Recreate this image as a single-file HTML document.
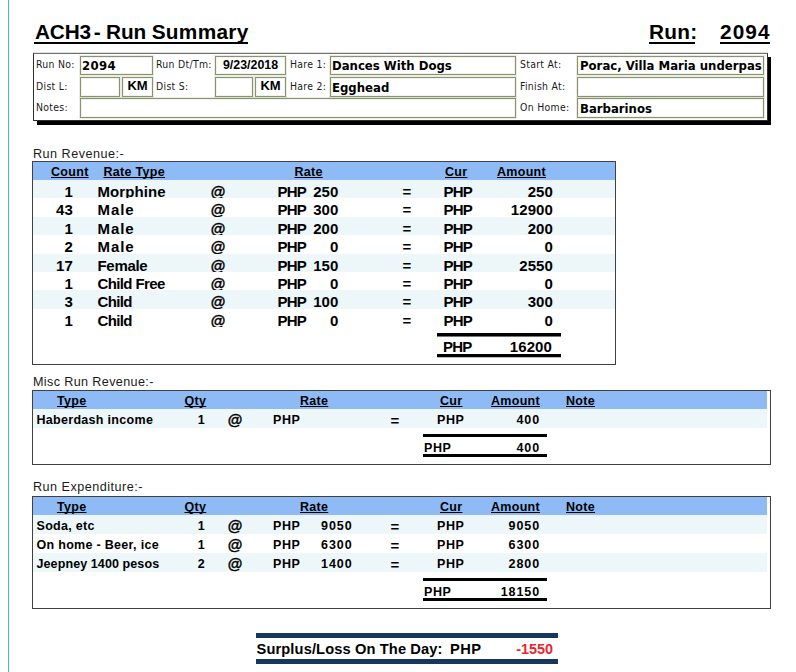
<!DOCTYPE html>
<html lang="en">
<head>
<meta charset="utf-8">
<title>ACH3 - Run Summary</title>
<style>
html,body{margin:0;padding:0;background:#fff;}
body{width:796px;height:672px;position:relative;overflow:hidden;font-family:"Liberation Sans",sans-serif;color:#000;}
.abs,.t,.box,.in,.band,.bar{position:absolute;}
.t{white-space:pre;line-height:1;}
.cal{font-family:"Liberation Sans",sans-serif;}
.lbl{font-family:"DejaVu Sans Condensed","Liberation Sans",sans-serif;font-size:10.4px;letter-spacing:0.3px;color:#1a1a1a;}
.val{font-family:"DejaVu Sans Condensed","Liberation Sans",sans-serif;font-weight:bold;font-size:13px;}
.arb{font-family:"Liberation Sans",sans-serif;font-weight:bold;font-size:12.4px;}
.in{box-sizing:border-box;border:1px solid #89946f;background:#fff;overflow:hidden;box-shadow:0 0 0 1px rgba(137,148,111,0.18), inset 0 0 0 1px rgba(137,148,111,0.12);}
.u{text-decoration:underline;}
.r{text-align:right;}
.c{text-align:center;}
.sec{font-size:12.6px;letter-spacing:0.5px;color:#1a1a1a;}
.th{font-weight:bold;font-size:12.5px;letter-spacing:0.3px;text-decoration:underline;text-decoration-skip-ink:none;}
.row{position:absolute;overflow:hidden;}
.row span{position:absolute;white-space:pre;line-height:1;font-weight:bold;}
.r1,.r1t{font-size:15px;top:4px;letter-spacing:0.1px;}
.r1t{font-weight:bold;}
.php{letter-spacing:-0.8px !important;}
.r2,.r2t{font-size:12.5px;top:5px;letter-spacing:0.3px;}
.row span.at{font-size:15px;top:3px;letter-spacing:0;}
.r2t{font-weight:bold;}
.php2{letter-spacing:0.6px !important;}
.num{letter-spacing:0.9px !important;}
.row span.ati{font-style:italic;-webkit-text-stroke:0.35px #000;}
.row span.eq{font-size:15px;top:4px;letter-spacing:0;}
.sur{font-weight:bold;font-size:14.67px;}
.surn{font-weight:bold;font-size:14.4px;color:#e8262d;}
</style>
</head>
<body>
<!-- left teal rule -->
<div class="abs" style="left:8px;top:0;width:1px;height:672px;background:#4fb5cb;"></div>
<div class="abs" style="left:9px;top:0;width:1px;height:672px;background:#f8f3f3;"></div>

<!-- title -->
<div class="t cal" id="title" style="left:35px;top:22px;font-size:20.8px;font-weight:bold;letter-spacing:-0.15px;"><span style="word-spacing:-3px;">ACH3 -</span> Run <span style="letter-spacing:0.3px;">Summary</span></div>
<div class="bar" style="left:34px;top:42px;width:214px;height:2px;background:#000;"></div>
<div class="t cal" id="runl" style="left:649px;letter-spacing:0.3px;top:22px;font-size:20.8px;font-weight:bold;">Run:</div>
<div class="bar" style="left:649px;top:42px;width:46px;height:2px;background:#000;"></div>
<div class="t cal" id="runv" style="left:720px;letter-spacing:1.1px;top:22px;font-size:20.8px;font-weight:bold;">2094</div>
<div class="bar" style="left:720px;top:42px;width:50px;height:2px;background:#000;"></div>

<!-- header box -->
<div class="bar" style="left:37px;top:121px;width:734px;height:4px;background:#000;"></div>
<div class="bar" style="left:768px;top:57px;width:3px;height:68px;background:#000;"></div>
<div class="box" style="left:33px;top:53px;width:735px;height:68px;box-sizing:border-box;border:1px solid #2e2e2e;border-top-color:#707070;background:#fff;box-shadow:0 -1px 0 rgba(0,0,0,0.12);"></div>

<div class="t lbl" style="left:36px;top:59px;">Run No:</div>
<div class="t lbl" style="left:36px;top:81px;">Dist L:</div>
<div class="t lbl" style="left:36px;top:102px;">Notes:</div>
<div class="t lbl" style="left:156px;top:59px;">Run Dt/Tm:</div>
<div class="t lbl" style="left:156px;top:81px;">Dist S:</div>
<div class="t lbl" style="left:290px;top:59px;">Hare 1:</div>
<div class="t lbl" style="left:290px;top:81px;">Hare 2:</div>
<div class="t lbl" style="left:520px;top:59px;">Start At:</div>
<div class="t lbl" style="left:520px;top:81px;">Finish At:</div>
<div class="t lbl" style="left:520px;top:102px;">On Home:</div>

<div class="in" style="left:80px;top:56px;width:73px;height:19px;"></div>
<div class="in" style="left:80px;top:77px;width:40px;height:20px;"></div>
<div class="in" style="left:122px;top:77px;width:31px;height:20px;"></div>
<div class="in" style="left:80px;top:98px;width:436px;height:20px;"></div>
<div class="in" style="left:215px;top:56px;width:71px;height:19px;"></div>
<div class="in" style="left:215px;top:77px;width:38px;height:20px;"></div>
<div class="in" style="left:255px;top:77px;width:31px;height:20px;"></div>
<div class="in" style="left:330px;top:56px;width:186px;height:19px;"></div>
<div class="in" style="left:330px;top:77px;width:186px;height:20px;"></div>
<div class="in" style="left:577px;top:56px;width:187px;height:19px;"></div>
<div class="in" style="left:577px;top:77px;width:187px;height:20px;"></div>
<div class="in" style="left:577px;top:98px;width:187px;height:20px;"></div>

<div class="t val" style="left:82px;top:59px;letter-spacing:0.4px;">2094</div>
<div class="t arb c" style="left:122px;top:79px;width:31px;font-size:13px;">KM</div>
<div class="t arb c" style="left:215px;top:59px;width:71px;">9/23/2018</div>
<div class="t arb c" style="left:255px;top:79px;width:31px;font-size:13px;">KM</div>
<div class="t val" style="left:332px;top:59px;">Dances With Dogs</div>
<div class="t val" style="left:332px;top:81px;">Egghead</div>
<div class="t val" style="left:580px;top:59px;">Porac, Villa Maria underpas</div>
<div class="t val" style="left:580px;top:102px;">Barbarinos</div>

<!--SECTIONS-->
<!-- Run Revenue -->
<div class="t sec" style="left:33px;top:148px;">Run Revenue:-</div>
<div class="box" style="left:32px;top:161px;width:584px;height:204px;box-sizing:border-box;border:1px solid #404040;"></div>
<div class="band" style="left:33px;top:162px;width:582px;height:18px;background:#8ebaf5;"></div>
<div class="t th" style="left:51px;top:166px;">Count</div>
<div class="t th" style="left:103.5px;top:166px;">Rate Type</div>
<div class="t th" style="left:294.5px;top:166px;">Rate</div>
<div class="t th" style="left:445px;top:166px;">Cur</div>
<div class="t th" style="left:497px;top:166px;">Amount</div>
<div class="row" style="left:33px;top:180px;width:582px;height:18px;background:#edf6f9;"><span class="r1" style="right:542px;">1</span><span class="r1" style="left:64.5px;letter-spacing:0.1px;">Morphine</span><span class="r1 ati" style="left:177.5px;">@</span><span class="r1 php" style="left:244.5px;">PHP</span><span class="r1" style="right:276.5px;">250</span><span class="r1" style="left:369.5px;">=</span><span class="r1 php" style="left:410.5px;">PHP</span><span class="r1" style="right:62px;">250</span></div>
<div class="row" style="left:33px;top:198px;width:582px;height:19px;"><span class="r1" style="right:542px;">43</span><span class="r1" style="left:64.5px;letter-spacing:0.9px;">Male</span><span class="r1 ati" style="left:177.5px;">@</span><span class="r1 php" style="left:244.5px;">PHP</span><span class="r1" style="right:276.5px;">300</span><span class="r1" style="left:369.5px;">=</span><span class="r1 php" style="left:410.5px;">PHP</span><span class="r1" style="right:62px;">12900</span></div>
<div class="row" style="left:33px;top:217px;width:582px;height:18px;background:#edf6f9;"><span class="r1" style="right:542px;">1</span><span class="r1" style="left:64.5px;letter-spacing:0.9px;">Male</span><span class="r1 ati" style="left:177.5px;">@</span><span class="r1 php" style="left:244.5px;">PHP</span><span class="r1" style="right:276.5px;">200</span><span class="r1" style="left:369.5px;">=</span><span class="r1 php" style="left:410.5px;">PHP</span><span class="r1" style="right:62px;">200</span></div>
<div class="row" style="left:33px;top:235px;width:582px;height:19px;"><span class="r1" style="right:542px;">2</span><span class="r1" style="left:64.5px;letter-spacing:0.9px;">Male</span><span class="r1 ati" style="left:177.5px;">@</span><span class="r1 php" style="left:244.5px;">PHP</span><span class="r1" style="right:276.5px;">0</span><span class="r1" style="left:369.5px;">=</span><span class="r1 php" style="left:410.5px;">PHP</span><span class="r1" style="right:62px;">0</span></div>
<div class="row" style="left:33px;top:254px;width:582px;height:18px;background:#edf6f9;"><span class="r1" style="right:542px;">17</span><span class="r1" style="left:64.5px;letter-spacing:-0.3px;">Female</span><span class="r1 ati" style="left:177.5px;">@</span><span class="r1 php" style="left:244.5px;">PHP</span><span class="r1" style="right:276.5px;">150</span><span class="r1" style="left:369.5px;">=</span><span class="r1 php" style="left:410.5px;">PHP</span><span class="r1" style="right:62px;">2550</span></div>
<div class="row" style="left:33px;top:272px;width:582px;height:18px;"><span class="r1" style="right:542px;">1</span><span class="r1" style="left:64.5px;letter-spacing:-0.62px;">Child Free</span><span class="r1 ati" style="left:177.5px;">@</span><span class="r1 php" style="left:244.5px;">PHP</span><span class="r1" style="right:276.5px;">0</span><span class="r1" style="left:369.5px;">=</span><span class="r1 php" style="left:410.5px;">PHP</span><span class="r1" style="right:62px;">0</span></div>
<div class="row" style="left:33px;top:290px;width:582px;height:19px;background:#edf6f9;"><span class="r1" style="right:542px;">3</span><span class="r1" style="left:64.5px;letter-spacing:-0.65px;">Child</span><span class="r1 ati" style="left:177.5px;">@</span><span class="r1 php" style="left:244.5px;">PHP</span><span class="r1" style="right:276.5px;">100</span><span class="r1" style="left:369.5px;">=</span><span class="r1 php" style="left:410.5px;">PHP</span><span class="r1" style="right:62px;">300</span></div>
<div class="row" style="left:33px;top:309px;width:582px;height:18px;"><span class="r1" style="right:542px;">1</span><span class="r1" style="left:64.5px;letter-spacing:-0.65px;">Child</span><span class="r1 ati" style="left:177.5px;">@</span><span class="r1 php" style="left:244.5px;">PHP</span><span class="r1" style="right:276.5px;">0</span><span class="r1" style="left:369.5px;">=</span><span class="r1 php" style="left:410.5px;">PHP</span><span class="r1" style="right:62px;">0</span></div>
<div class="bar" style="left:437px;top:333px;width:124px;height:3px;background:#000;border-bottom:1px solid #777;"></div>
<div class="bar" style="left:437px;top:354px;width:124px;height:3px;background:#000;border-bottom:1px solid #bbb;"></div>
<div class="t r1t php" style="left:443px;top:339px;">PHP</div>
<div class="t r1t" style="left:352px;width:200px;text-align:right;top:339px;">16200</div>
<!-- Misc Run Revenue:- -->
<div class="t sec" style="left:33px;top:376px;letter-spacing:0.37px;">Misc Run Revenue:-</div>
<div class="box" style="left:32px;top:390px;width:739px;height:75px;box-sizing:border-box;border:1px solid #404040;"></div>
<div class="band" style="left:33px;top:391px;width:734px;height:18px;background:#8ebaf5;"></div>
<div class="t th" style="left:57px;top:395px;">Type</div>
<div class="t th" style="left:184.5px;top:395px;">Qty</div>
<div class="t th" style="left:300px;top:395px;">Rate</div>
<div class="t th" style="left:440px;top:395px;">Cur</div>
<div class="t th" style="left:491px;top:395px;">Amount</div>
<div class="t th" style="left:566px;top:395px;">Note</div>
<div class="row" style="left:33px;top:409px;width:734px;height:19px;background:#edf6f9;"><span class="r2" style="left:3.5px;">Haberdash income</span><span class="r2" style="right:562px;">1</span><span class="r2 at ati" style="left:194.5px;">@</span><span class="r2 php2" style="left:240px;">PHP</span><span class="r2 num" style="right:414.5px;"></span><span class="r2 eq" style="left:357.5px;">=</span><span class="r2 php2" style="left:404px;">PHP</span><span class="r2 num" style="right:227px;">400</span></div>
<div class="bar" style="left:423px;top:434px;width:124px;height:3px;background:#000;"></div>
<div class="bar" style="left:423px;top:454px;width:124px;height:3px;background:#000;"></div>
<div class="t r2t php2" style="left:424px;top:442px;">PHP</div>
<div class="t r2t num" style="left:340px;width:200px;text-align:right;top:442px;">400</div>
<!-- Run Expenditure:- -->
<div class="t sec" style="left:33px;top:481px;">Run Expenditure:-</div>
<div class="box" style="left:32px;top:496px;width:739px;height:113px;box-sizing:border-box;border:1px solid #404040;"></div>
<div class="band" style="left:33px;top:497px;width:734px;height:18px;background:#8ebaf5;"></div>
<div class="t th" style="left:57px;top:501px;">Type</div>
<div class="t th" style="left:184.5px;top:501px;">Qty</div>
<div class="t th" style="left:300px;top:501px;">Rate</div>
<div class="t th" style="left:440px;top:501px;">Cur</div>
<div class="t th" style="left:491px;top:501px;">Amount</div>
<div class="t th" style="left:566px;top:501px;">Note</div>
<div class="row" style="left:33px;top:515px;width:734px;height:19px;background:#edf6f9;"><span class="r2" style="left:3.5px;">Soda, etc</span><span class="r2" style="right:562px;">1</span><span class="r2 at ati" style="left:194.5px;">@</span><span class="r2 php2" style="left:240px;">PHP</span><span class="r2 num" style="right:414.5px;">9050</span><span class="r2 eq" style="left:357.5px;">=</span><span class="r2 php2" style="left:404px;">PHP</span><span class="r2 num" style="right:227px;">9050</span></div>
<div class="row" style="left:33px;top:534px;width:734px;height:19px;"><span class="r2" style="left:3.5px;">On home - Beer, ice</span><span class="r2" style="right:562px;">1</span><span class="r2 at ati" style="left:194.5px;">@</span><span class="r2 php2" style="left:240px;">PHP</span><span class="r2 num" style="right:414.5px;">6300</span><span class="r2 eq" style="left:357.5px;">=</span><span class="r2 php2" style="left:404px;">PHP</span><span class="r2 num" style="right:227px;">6300</span></div>
<div class="row" style="left:33px;top:553px;width:734px;height:19px;background:#edf6f9;"><span class="r2" style="left:3.5px;letter-spacing:0.1px;">Jeepney 1400 pesos</span><span class="r2" style="right:562px;">2</span><span class="r2 at ati" style="left:194.5px;">@</span><span class="r2 php2" style="left:240px;">PHP</span><span class="r2 num" style="right:414.5px;">1400</span><span class="r2 eq" style="left:357.5px;">=</span><span class="r2 php2" style="left:404px;">PHP</span><span class="r2 num" style="right:227px;">2800</span></div>
<div class="bar" style="left:423px;top:578px;width:124px;height:3px;background:#000;"></div>
<div class="bar" style="left:423px;top:598px;width:124px;height:3px;background:#000;"></div>
<div class="t r2t php2" style="left:424px;top:586px;">PHP</div>
<div class="t r2t num" style="left:340px;width:200px;text-align:right;top:586px;">18150</div>
<!-- Surplus -->
<div class="bar" style="left:256px;top:633px;width:302px;height:5px;background:#17375e;"></div>
<div class="bar" style="left:256px;top:659px;width:302px;height:5px;background:#17375e;"></div>
<div class="t sur" style="left:256.5px;top:642px;letter-spacing:0.12px;">Surplus/Loss On The Day:</div>
<div class="t sur" style="left:450px;top:642px;letter-spacing:0.4px;">PHP</div>
<div class="t surn" style="left:353px;width:200px;text-align:right;top:642px;">-1550</div>
<!--/SECTIONS-->
</body>
</html>
